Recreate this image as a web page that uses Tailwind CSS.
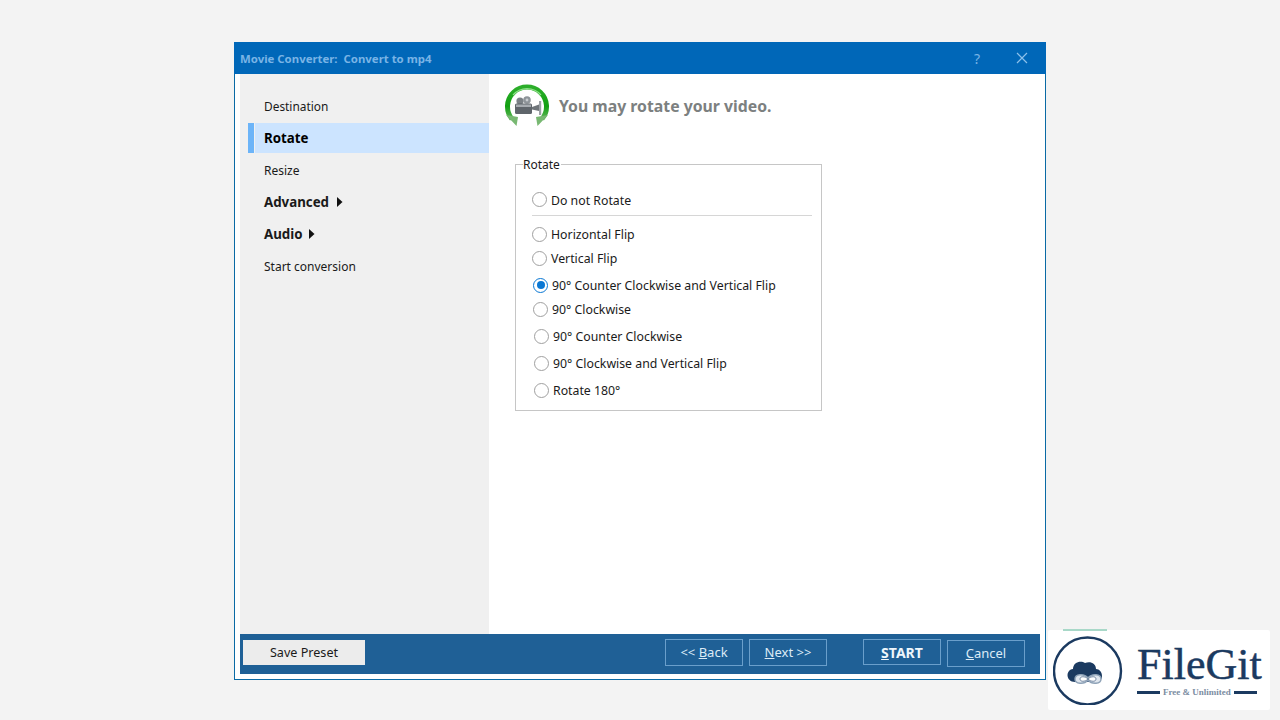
<!DOCTYPE html>
<html lang="en">
  <head>
    <meta charset="UTF-8" />
    <title>Movie Converter</title>
    <script src="https://cdn.jsdelivr.net/npm/@tailwindcss/browser@4"></script>
  </head>
  <body class="relative h-[720px] w-[1280px] overflow-hidden bg-[#f3f3f3] pt-[42px] pl-[234px] font-['Noto_Sans',sans-serif] text-[12px] text-[#1a1a1a]">
    <!-- window -->
    <div class="flex h-[638px] w-[812px] flex-col border border-t-0 border-[#0a6aa5] bg-white">
      <div class="flex h-[32px] shrink-0 items-center justify-between bg-[#0067b8] pl-[6px] -mx-px">
        <span class="mt-[2px] text-[11.4px] font-bold text-[#79b4e6]">Movie Converter:&nbsp; Convert to mp4</span>
        <div class="flex items-center">
          <span class="mr-[36px] text-[14px] text-[#79b4e6]">?</span>
          <svg class="mr-[18px]" width="12" height="12" viewBox="0 0 12 12" fill="none" stroke="#8cc0ea" stroke-width="1.2"><path d="M1 1l10 10M11 1L1 11" /></svg>
        </div>
      </div>

      <div class="flex min-h-0 flex-1 pl-[5px]">
        <!-- sidebar -->
        <nav class="w-[249px] shrink-0 bg-[#f0f0f0] pt-[16px] pl-[8px]">
          <div class="flex h-[32px] items-center pl-[16px] pt-[2px] text-[11.9px]">Destination</div>
          <div class="flex h-[32px] items-center">
            <div class="flex h-[30px] w-full items-center">
              <span class="h-full w-[6px] bg-[#6cb4f8]"></span>
              <span class="ml-px flex h-full flex-1 items-center bg-[#cce4ff] pl-[9px] pt-[2px] text-[13.3px] font-bold text-black">Rotate</span>
            </div>
          </div>
          <div class="flex h-[32px] items-center pl-[16px] pt-[2px]">Resize</div>
          <div class="flex h-[32px] items-center pl-[16px] text-[13.3px] font-bold">
            <span class="mt-[2px]">Advanced</span>
            <svg class="ml-[8px]" width="6" height="10" viewBox="0 0 6 10"><path d="M0 0l5.5 5L0 10z" fill="#111" /></svg>
          </div>
          <div class="flex h-[32px] items-center pl-[16px] text-[13.3px] font-bold">
            <span class="mt-[2px]">Audio</span>
            <svg class="ml-[6px]" width="6" height="10" viewBox="0 0 6 10"><path d="M0 0l5.5 5L0 10z" fill="#111" /></svg>
          </div>
          <div class="flex h-[32px] items-center pl-[16px] pt-[2px]">Start conversion</div>
        </nav>

        <!-- content -->
        <main class="flex-1 pl-[14px]">
          <div class="flex h-[62px] items-start pt-[9px]">
            <svg width="48" height="44" viewBox="0 0 48 44" class="shrink-0">
              <defs>
                <linearGradient id="ring" x1="0" y1="0" x2="0" y2="1">
                  <stop offset="0" stop-color="#2cae2a" />
                  <stop offset="0.6" stop-color="#12a012" />
                  <stop offset="1" stop-color="#5fb558" />
                </linearGradient>
              </defs>
              <path d="M9 36A19.5 19.5 0 1 1 39 36" fill="none" stroke="url(#ring)" stroke-width="5" />
              <path d="M10 12A18.5 18.5 0 0 1 38 12" fill="none" stroke="#8fe08a" stroke-width="1.2" />
              <path d="M3 32l12 2-1.5 9z" fill="#78b872" />
              <path d="M45 32l-12 2 1.500 9z" fill="#78b872" />
              <circle cx="17" cy="18" r="3.600" fill="#7b8186" />
              <circle cx="24" cy="17" r="3.800" fill="#8e9499" />
              <circle cx="24" cy="17" r="1.400" fill="#c8ccd0" />
              <rect x="12" y="20.500" width="17" height="10.500" rx="1.500" fill="#5f656b" />
              <rect x="13" y="21.500" width="15" height="2.500" fill="#a6abb0" />
              <path d="M29 24l7-2.500v6.500l-7-1.500z" fill="#6f757a" />
              <path d="M36 18h2.200v14H36z" fill="#9ba0a5" />
            </svg>
            <h1 class="ml-[8px] mt-[11px] text-[15.8px] leading-[24px] font-bold text-[#7c8080]">You may rotate your video.</h1>
          </div>

          <div class="relative ml-[12px] mt-[28px] h-[247px] w-[307px] border border-[#c6c6c6] pl-[16px] pt-[22px] text-[12.3px]">
            <span class="absolute -top-[7px] left-[7px] bg-white pr-px text-[12px] leading-[14px]">Rotate</span>
            <div class="flex h-[24px] items-center gap-[4px]">
              <span class="h-[15px] w-[15px] rounded-full border border-[#a0a0a0]"></span><span class="mt-[4px]">Do not Rotate</span>
            </div>
            <div class="mt-[4px] h-px w-[280px] bg-[#d6d6d6]"></div>
            <div class="mt-[6px] flex h-[24px] items-center gap-[4px]">
              <span class="h-[15px] w-[15px] rounded-full border border-[#a0a0a0]"></span><span class="mt-[2px]">Horizontal Flip</span>
            </div>
            <div class="flex h-[24px] items-center gap-[4px]">
              <span class="h-[15px] w-[15px] rounded-full border border-[#a0a0a0]"></span><span class="mt-[2px]">Vertical Flip</span>
            </div>
            <div class="ml-px mt-[3px] flex h-[24px] items-center gap-[4px]">
              <span class="flex h-[15px] w-[15px] items-center justify-center rounded-full border border-[#0a78d4]"><span class="h-[8px] w-[8px] rounded-full bg-[#0a78d4]"></span></span><span class="mt-[2px]">90° Counter Clockwise and Vertical Flip</span>
            </div>
            <div class="ml-px flex h-[24px] items-center gap-[4px]">
              <span class="h-[15px] w-[15px] rounded-full border border-[#a0a0a0]"></span><span class="mt-[2px]">90° Clockwise</span>
            </div>
            <div class="ml-[2px] mt-[3px] flex h-[24px] items-center gap-[4px]">
              <span class="h-[15px] w-[15px] rounded-full border border-[#a0a0a0]"></span><span class="mt-[2px]">90° Counter Clockwise</span>
            </div>
            <div class="ml-[2px] mt-[3px] flex h-[24px] items-center gap-[4px]">
              <span class="h-[15px] w-[15px] rounded-full border border-[#a0a0a0]"></span><span class="mt-[2px]">90° Clockwise and Vertical Flip</span>
            </div>
            <div class="ml-[2px] mt-[3px] flex h-[24px] items-center gap-[4px]">
              <span class="h-[15px] w-[15px] rounded-full border border-[#a0a0a0]"></span><span class="mt-[2px]">Rotate 180°</span>
            </div>
          </div>
        </main>
      </div>

      <!-- footer -->
      <div class="mx-[5px] mb-[5px] flex h-[40px] shrink-0 items-start bg-[#1f6096] pl-[3px] text-[13px] text-[#dcebf6]">
        <button class="mt-[6px] h-[25px] w-[122px] bg-[#ececec] pt-[2px] text-[12.6px] text-[#1a1a1a]">Save Preset</button>
        <button class="ml-[300px] mt-[5px] h-[27px] w-[78px] border border-[#6a9fcb]">&lt;&lt; <u>B</u>ack</button>
        <button class="ml-[6px] mt-[5px] h-[27px] w-[78px] border border-[#6a9fcb]"><u>N</u>ext &gt;&gt;</button>
        <button class="ml-[36px] mt-[5px] h-[26px] w-[78px] border border-[#6a9fcb] text-[14px] font-bold text-[#eef6fc]"><u>S</u>TART</button>
        <button class="ml-[6px] mt-[6px] h-[27px] w-[78px] border border-[#6a9fcb]"><u>C</u>ancel</button>
      </div>
    </div>

    <!-- watermark -->
    <div class="absolute left-[1048px] top-[630px] flex h-[80px] w-[222px] items-center rounded-[2px] bg-white pl-[5px]">
      <span class="absolute -top-px left-[15px] h-[2px] w-[44px] bg-[#a8d8c8]"></span>
      <svg width="70" height="70" viewBox="0 0 70 70" class="shrink-0">
        <circle cx="34.500" cy="36" r="33.500" fill="none" stroke="#1b3a60" stroke-width="2.400" />
        <path d="M22 47c-9 0-10-12-2-13 0-7 8-9 12-6 5-2 11 0 11 6 7 0 9 13 0 13z" fill="#1b3a60" />
        <path d="M35 43c-4-5-13-4-13 1s9 6 13 1c4 5 13 4 13-1s-9-6-13-1z" fill="#dfe6ee" stroke="#8fa3b8" stroke-width="1.400" />
        <path d="M35 44c-3-3-8-3-8 0s5 3 8 0c3 3 8 3 8 0s-5-3-8 0z" fill="#fff" stroke="#5a7290" stroke-width="0.800" />
      </svg>
      <div class="ml-[14px] flex flex-col font-['Liberation_Serif',serif] text-[#1b3a60]">
        <span class="text-[44px] leading-[44px] [-webkit-text-stroke:0.5px_#1b3a60]">FileGit</span>
        <div class="flex items-center gap-[3px]">
          <span class="h-[3px] w-[23px] bg-[#1b3a60]"></span>
          <span class="text-[9px] leading-[10px] font-bold text-[#7c8da2]">Free &amp; Unlimited</span>
          <span class="h-[3px] w-[23px] bg-[#1b3a60]"></span>
        </div>
      </div>
    </div>
  </body>
</html>
